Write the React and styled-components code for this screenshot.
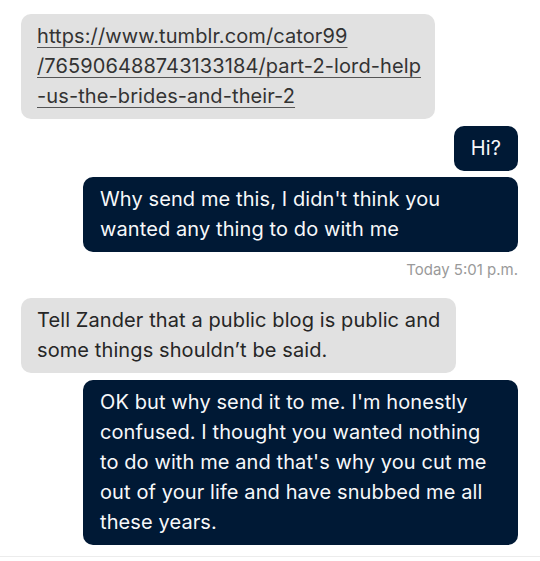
import styled, { createGlobalStyle } from "styled-components";

const GlobalStyle = createGlobalStyle`
  body {
    margin: 0;
    background: #ffffff;
    font-family: Inter, "Noto Sans", sans-serif;
  }
`;

const messages = [
  { from: "them", link: true },
  { from: "me", text: "Hi?" },
  {
    from: "me",
    text: "Why send me this, I didn't think you wanted any thing to do with me",
    time: "Today 5:01 p.m.",
    tight: true,
  },
  {
    from: "them",
    text: "Tell Zander that a public blog is public and some things shouldn\u2019t be said.",
  },
  {
    from: "me",
    text: "OK but why send it to me. I'm honestly confused. I thought you wanted nothing to do with me and that's why you cut me out of your life and have snubbed me all these years.",
  },
];

function gapFor(i) {
  if (i === 0) return 0;
  if (messages[i - 1].time) return 18;
  if (messages[i].tight) return 6;
  return 7;
}

function App() {
  return (
    <>
      <GlobalStyle />
      <Thread>
        {messages.map((m, i) => (
          <Group key={i} $from={m.from} $gap={gapFor(i)}>
            <Bubble $from={m.from}>
              {m.link ? (
                <LinkText href="#">
                  https://www.tumblr.com/cator99
                  <br />
                  /765906488743133184/part-2-lord-help
                  <br />
                  -us-the-brides-and-their-2
                </LinkText>
              ) : (
                m.text
              )}
            </Bubble>
            {m.time && <Timestamp>{m.time}</Timestamp>}
          </Group>
        ))}
      </Thread>
      <Footer />
    </>
  );
}

export default App;

const Thread = styled.div`
  display: flex;
  flex-direction: column;
  padding: 14px 22px 0 21px;
`;

const Group = styled.div`
  display: flex;
  flex-direction: column;
  align-items: ${(p) => (p.$from === "me" ? "flex-end" : "flex-start")};
  margin-top: ${(p) => p.$gap}px;
`;

const Bubble = styled.div`
  box-sizing: border-box;
  max-width: 435px;
  padding: ${(p) => (p.$from === "me" ? "7px 17px 8px 17px" : "7px 14px 8px 16px")};
  border-radius: 10px;
  font-size: 20px;
  line-height: 30px;
  letter-spacing: 0.1px;
  background: ${(p) => (p.$from === "me" ? "#001935" : "#e1e1e1")};
  color: ${(p) => (p.$from === "me" ? "#f7f8fa" : "#262626")};
`;

const LinkText = styled.a`
  color: #333333;
  text-decoration: underline;
  text-decoration-color: #555555;
  text-underline-offset: 4px;
  text-decoration-thickness: 1px;
`;

const Timestamp = styled.div`
  margin-top: 8px;
  font-size: 15px;
  line-height: 20px;
  color: #9a9a9a;
`;

const Footer = styled.div`
  margin-top: 11px;
  border-top: 1px solid #ececec;
  height: 5px;
`;
